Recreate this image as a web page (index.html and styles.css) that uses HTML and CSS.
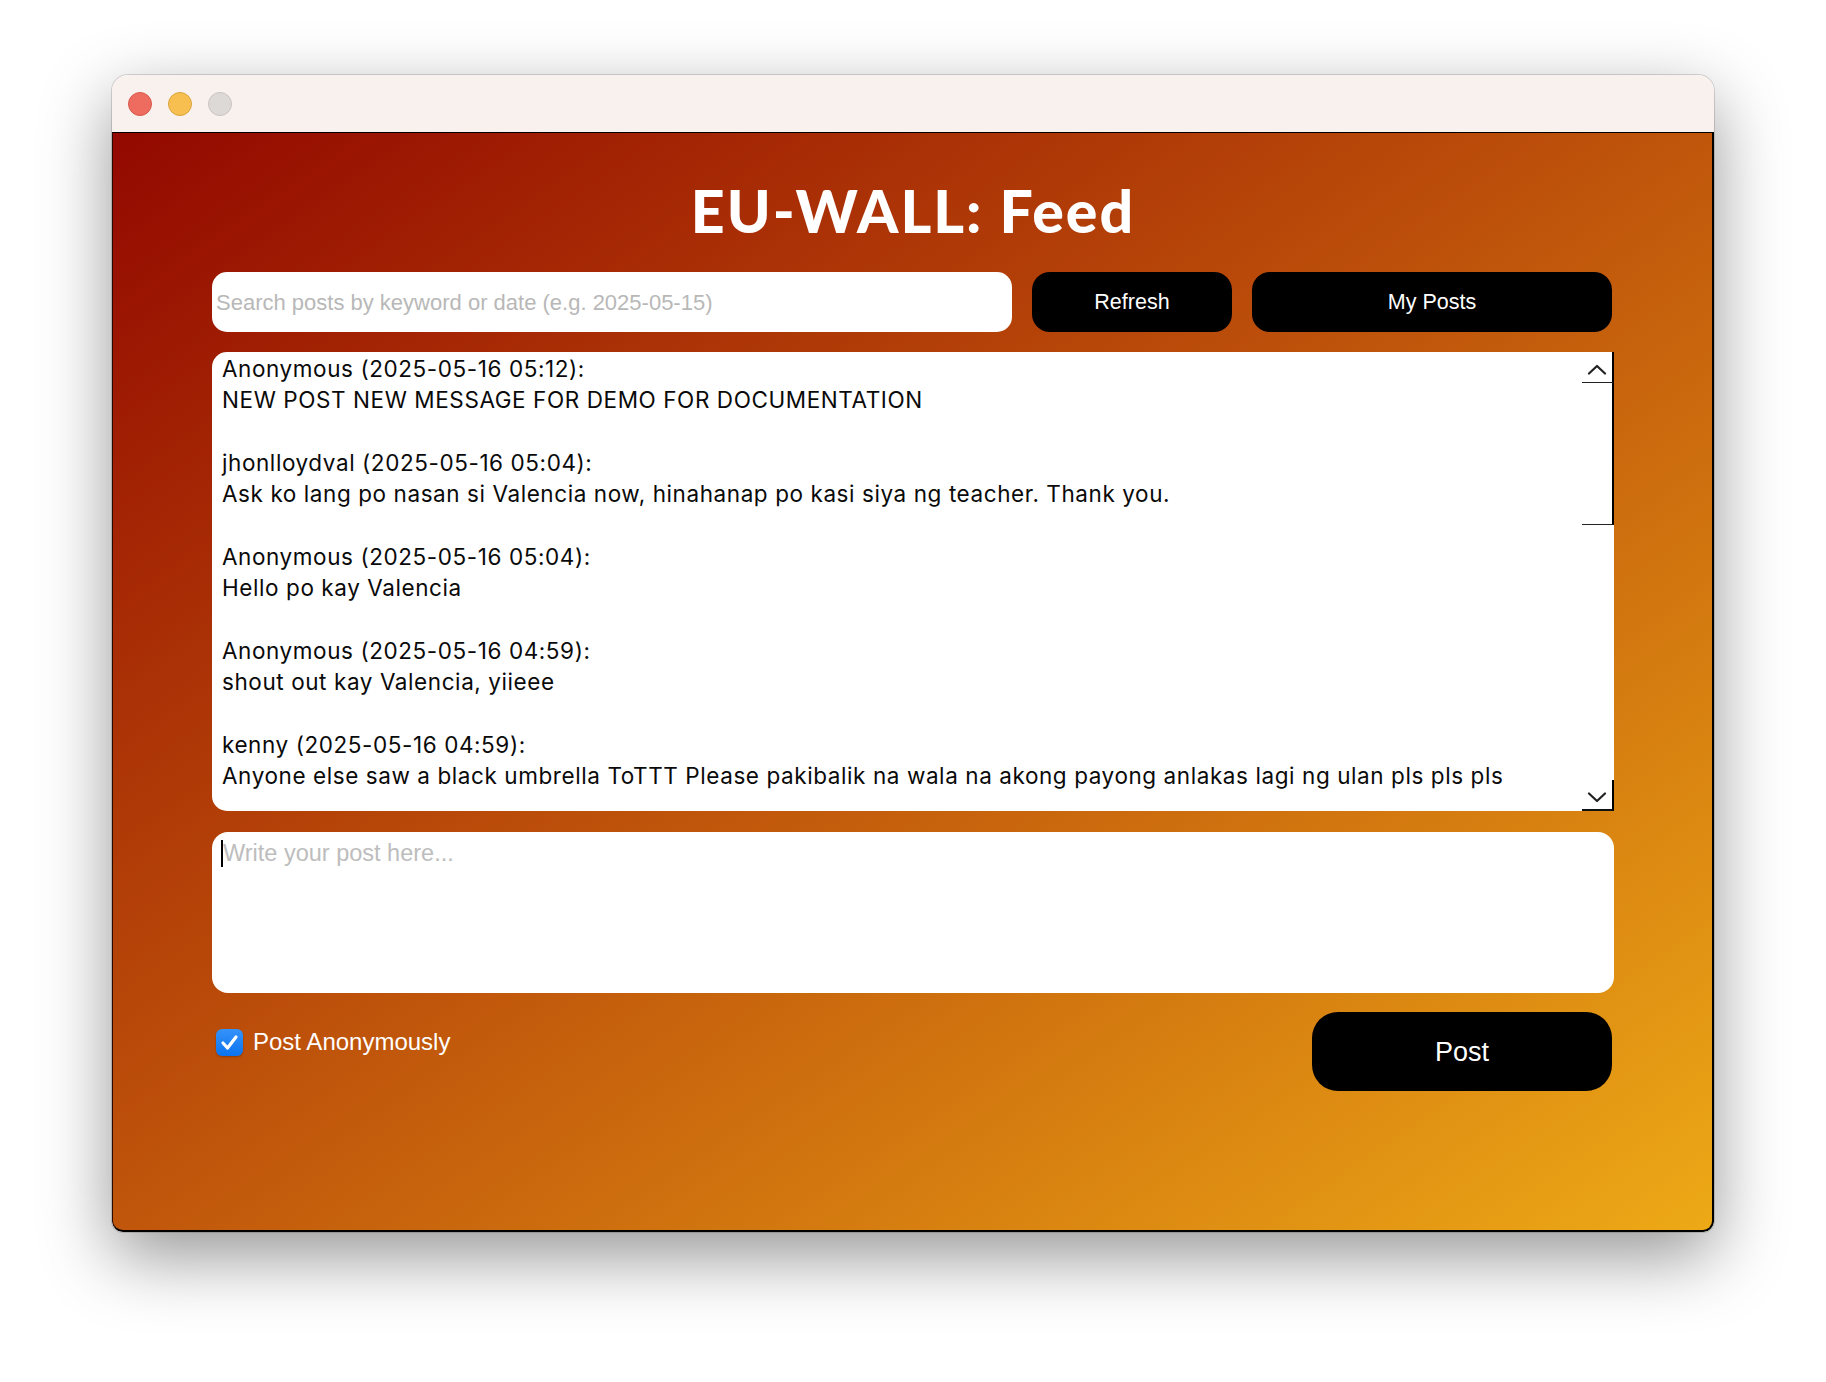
FILE: index.html
```html
<!DOCTYPE html>
<html>
<head>
<meta charset="utf-8">
<title>EU-WALL: Feed</title>
<link rel="stylesheet" href="styles.css">
</head>
<body>
<div class="window">
  <div class="titlebar">
    <span class="light red"></span>
    <span class="light yellow"></span>
    <span class="light gray"></span>
  </div>
  <div class="content">
    <h1 class="title">EU-WALL: Feed</h1>
    <div class="toolbar">
      <div class="search"><span class="search-ph">Search posts by keyword or date (e.g. 2025-05-15)</span></div>
      <button class="btn btn-refresh">Refresh</button>
      <button class="btn btn-myposts">My Posts</button>
    </div>
    <div class="feed">
      <div class="feed-text">
        <div class="post">
          <div class="line">Anonymous (2025-05-16 05:12):</div>
          <div class="line">NEW POST NEW MESSAGE FOR DEMO FOR DOCUMENTATION</div>
        </div>
        <div class="post">
          <div class="line">jhonlloydval (2025-05-16 05:04):</div>
          <div class="line">Ask ko lang po nasan si Valencia now, hinahanap po kasi siya ng teacher. Thank you.</div>
        </div>
        <div class="post">
          <div class="line">Anonymous (2025-05-16 05:04):</div>
          <div class="line">Hello po kay Valencia</div>
        </div>
        <div class="post">
          <div class="line">Anonymous (2025-05-16 04:59):</div>
          <div class="line">shout out kay Valencia, yiieee</div>
        </div>
        <div class="post">
          <div class="line">kenny (2025-05-16 04:59):</div>
          <div class="line">Anyone else saw a black umbrella ToTTT Please pakibalik na wala na akong payong anlakas lagi ng ulan pls pls pls</div>
        </div>
      </div>
      <div class="scrollbar">
        <div class="sb-up"><svg class="chev" width="20" height="11" viewBox="0 0 20 11"><polyline points="2,9.5 10,2 18,9.5"/></svg></div>
        <div class="sb-thumb"></div>
        <div class="sb-track"></div>
        <div class="sb-down"><svg class="chev" width="20" height="11" viewBox="0 0 20 11"><polyline points="2,1.5 10,9 18,1.5"/></svg></div>
      </div>
    </div>
    <div class="composer">
      <span class="caret"></span>
      <span class="composer-ph">Write your post here...</span>
    </div>
    <div class="actions">
      <label class="check">
        <span class="box"><svg width="27" height="27" viewBox="0 0 27 27"><polyline points="7,14 11.5,19 20,8"/></svg></span>
        <span class="check-label">Post Anonymously</span>
      </label>
      <button class="btn btn-post">Post</button>
    </div>
  </div>
</div>
</body>
</html>
```

FILE: styles.css
```css
html, body {
  margin: 0;
  padding: 0;
}

body {
  background: #ffffff;
  width: 1826px;
  height: 1382px;
  overflow: hidden;
  font-family: "Liberation Sans", Arial, sans-serif;
}

.window {
  margin: 75px 0 0 112px;
  width: 1602px;
  height: 1157px;
  border-radius: 16px 16px 11px 11px;
  overflow: hidden;
  display: flex;
  flex-direction: column;
  box-shadow: 0 24px 70px rgba(0, 0, 0, 0.42), 0 0 0 1px rgba(0, 0, 0, 0.14);
}

.titlebar {
  height: 57px;
  flex: 0 0 57px;
  background: #f9f1ee;
  display: flex;
  align-items: center;
  gap: 16px;
  padding-left: 16px;
  box-sizing: border-box;
}

.light {
  width: 24px;
  height: 24px;
  border-radius: 50%;
  box-sizing: border-box;
  border: 1px solid transparent;
}

.red { background: #ee6b5f; border-color: #d8584d; }
.yellow { background: #f6bf50; border-color: #dca53b; }
.gray { background: #ddd9d6; border-color: #c9c4c1; }

.content {
  flex: 1;
  border-top: 1px solid #000;
  border-left: 1px solid #2a0a00;
  border-right: 2px solid #000;
  border-bottom: 2px solid #000;
  border-radius: 0 0 11px 11px;
  background: linear-gradient(to bottom right, #930800 0%, #c0560b 50%, #eda916 100%);
  padding-left: 99px;
  display: flex;
  flex-direction: column;
}

.title {
  margin: 49px 0 32px;
  width: 1402px;
  height: 58px;
  line-height: 58px;
  font-family: "Lato", "Liberation Sans", sans-serif;
  font-weight: 900;
  font-size: 59px;
  letter-spacing: 2px;
  color: #ffffff;
  text-align: center;
}

.toolbar {
  display: flex;
  gap: 20px;
  height: 60px;
}

.search {
  width: 800px;
  height: 60px;
  background: #ffffff;
  border-radius: 15px;
  display: flex;
  align-items: center;
  padding-left: 4px;
  box-sizing: border-box;
}

.search-ph {
  font-size: 22px;
  color: #b8b8b8;
  position: relative;
  top: 1px;
}

.btn {
  border: none;
  background: #000;
  color: #fff;
  font-family: "Liberation Sans", Arial, sans-serif;
  padding: 0;
  cursor: pointer;
}

.btn-refresh {
  width: 200px;
  height: 60px;
  border-radius: 18px;
  font-size: 21.5px;
}

.btn-myposts {
  width: 360px;
  height: 60px;
  border-radius: 18px;
  font-size: 21.5px;
}

.feed {
  margin-top: 20px;
  width: 1402px;
  height: 459px;
  background: #ffffff;
  border-radius: 15px 0 0 15px;
  display: flex;
  overflow: hidden;
}

.feed-text {
  flex: 1;
  padding: 2px 0 0 10px;
  font-family: "Inter", "Liberation Sans", sans-serif;
  font-size: 22.5px;
  letter-spacing: 0.58px;
  line-height: 30.5px;
  color: #0a0a0a;
  white-space: nowrap;
}

.post + .post {
  margin-top: 33px;
}

.scrollbar {
  width: 32px;
  display: flex;
  flex-direction: column;
}

.sb-up {
  height: 31px;
  box-sizing: border-box;
  border-right: 2px solid #000;
  border-bottom: 1px solid #222;
  display: flex;
  justify-content: center;
  padding-top: 12px;
}

.sb-thumb {
  height: 142px;
  box-sizing: border-box;
  border-right: 2px solid #000;
  border-bottom: 1px solid #222;
}

.sb-track {
  flex: 1;
}

.sb-down {
  height: 31px;
  box-sizing: border-box;
  border-right: 2px solid #000;
  border-bottom: 2px solid #111;
  display: flex;
  justify-content: center;
  padding-top: 12px;
}

.chev polyline {
  fill: none;
  stroke: #222;
  stroke-width: 2.2;
  stroke-linecap: round;
  stroke-linejoin: round;
}

.composer {
  margin-top: 21px;
  width: 1402px;
  height: 161px;
  background: #ffffff;
  border-radius: 16px;
  box-sizing: border-box;
  padding: 8px 0 0 9px;
  display: flex;
  align-items: flex-start;
}

.caret {
  width: 2px;
  height: 27px;
  background: #000;
}

.composer-ph {
  font-size: 23.5px;
  line-height: 27px;
  color: #bdbdbd;
}

.actions {
  margin-top: 19px;
  width: 1402px;
  display: flex;
  justify-content: space-between;
  align-items: flex-start;
}

.check {
  margin: 16px 0 0 4px;
  display: flex;
  align-items: center;
  gap: 10px;
  color: #fff;
  font-size: 24px;
}

.box {
  width: 27px;
  height: 27px;
  border-radius: 6px;
  background: linear-gradient(#3592f9, #0b74f0);
  box-shadow: 0 1px 2px rgba(0, 0, 0, 0.25);
  display: block;
}

.box svg {
  display: block;
}

.box polyline {
  fill: none;
  stroke: #fff;
  stroke-width: 3.2;
  stroke-linecap: round;
  stroke-linejoin: round;
}

.btn-post {
  width: 300px;
  height: 79px;
  margin-right: 2px;
  border-radius: 26px;
  font-size: 27px;
  padding-top: 2px;
}
```
